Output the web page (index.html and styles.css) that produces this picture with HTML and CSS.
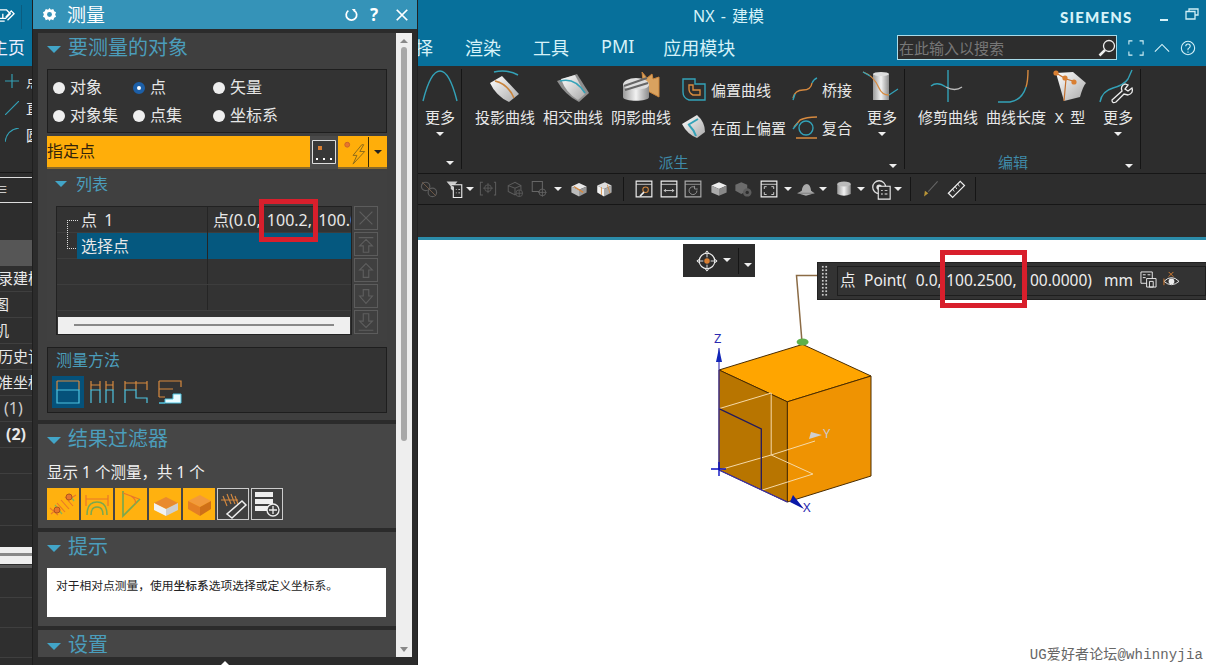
FILE: index.html
```html
<!DOCTYPE html>
<html lang="zh">
<head>
<meta charset="utf-8">
<title>NX - 建模</title>
<link rel="stylesheet" href="styles.css">
</head>
<body>
<svg class="sprite" aria-hidden="true">
  <defs>
    <linearGradient id="sheet" x1="0" y1="0" x2="1" y2="1"><stop offset="0" stop-color="#fff"/><stop offset="1" stop-color="#a9a9a9"/></linearGradient>
    <linearGradient id="cyl" x1="0" y1="0" x2="1" y2="0"><stop offset="0" stop-color="#9a9a9a"/><stop offset=".5" stop-color="#f2f2f2"/><stop offset="1" stop-color="#8c8c8c"/></linearGradient>
  </defs>
  <symbol id="r-arc" viewBox="0 0 40 36"><path d="M3 32C8 12 14 2 20 2s12 10 17 30" fill="none" stroke="#33a2b8" stroke-width="1.4"/></symbol>
  <symbol id="r-proj" viewBox="0 0 40 36"><path d="M5 14 17 7 34 25 24 33Q11 27 5 14Z" fill="url(#sheet)"/><path d="M10 12Q23 15 29 29" fill="none" stroke="#c9843c" stroke-width="1.6"/><path d="M9 3Q22 0 33 6" fill="none" stroke="#33a2b8" stroke-width="1.6"/></symbol>
  <symbol id="r-inter" viewBox="0 0 40 36"><path d="M4 12 24 5 36 24 26 33Q12 26 4 12Z" fill="#8f8f8f"/><path d="M8 10 22 6 32 25 25 31Q13 24 8 10Z" fill="url(#sheet)"/><path d="M7 12Q22 8 32 24" fill="none" stroke="#33a2b8" stroke-width="1.6"/></symbol>
  <symbol id="r-shadow" viewBox="0 0 40 36"><path d="M21 3 26 9 31 5 32 10 38 8 38 28 23 20Z" fill="#d9a25f" stroke="#c9843c"/><ellipse cx="15" cy="16" rx="13" ry="7" fill="#ddd"/><path d="M2 16V28C2 33 28 33 28 28V16C28 22 2 22 2 16Z" fill="url(#cyl)"/><path d="M3 17 26 9M4 21 27 14" stroke="#666" stroke-width="2"/></symbol>
  <symbol id="s-offset" viewBox="0 0 26 26"><path d="M2 3H14V8H24V24H8Q2 22 2 16Z" fill="none" stroke="#33a2b8" stroke-width="1.4"/><path d="M8 9H12V14H19V19H12Q8 17 8 13Z" fill="none" stroke="#d78a3f" stroke-width="1.4"/></symbol>
  <symbol id="s-face" viewBox="0 0 26 26"><path d="M1 10 16 1Q24 8 24 18L16 24Q6 20 1 10Z" fill="url(#sheet)"/><path d="M7 11 17 5M8 11Q13 16 15 22" fill="none" stroke="#33a2b8" stroke-width="2"/></symbol>
  <symbol id="s-bridge" viewBox="0 0 26 26"><path d="M1 22Q3 14 11 14T20 7" fill="none" stroke="#d78a3f" stroke-width="1.4"/><path d="M1 24 3 18M20 7Q22 3 25 2" fill="none" stroke="#33a2b8" stroke-width="1.4"/></symbol>
  <symbol id="s-comp" viewBox="0 0 26 26"><circle cx="14" cy="14" r="7" fill="none" stroke="#33a2b8" stroke-width="1.4"/><path d="M2 13 8 6Q14 3 25 3M4 24H25" fill="none" stroke="#d78a3f" stroke-width="1.4"/><path d="M1 15 6 9" stroke="#33a2b8" stroke-width="1.4"/></symbol>
  <symbol id="r-more2" viewBox="0 0 40 36"><path d="M11 5H27V31H11Z" fill="url(#cyl)"/><ellipse cx="19" cy="5" rx="8" ry="2" fill="#ddd"/><path d="M1 3C10 6 14 12 17 19S26 26 27 26" fill="none" stroke="#d78a3f" stroke-width="1.3"/><path d="M1 3 8 7M27 26 36 20" stroke="#33a2b8" stroke-width="1.3"/></symbol>
  <symbol id="r-trim" viewBox="0 0 40 36"><path d="M20 1V33" stroke="#33a2b8" stroke-width="1.4"/><path d="M3 17Q9 12 18 18" fill="none" stroke="#33a2b8" stroke-width="1.4"/><path d="M18 18Q27 23 34 18" fill="none" stroke="#bbb" stroke-width="1.4"/></symbol>
  <symbol id="r-len" viewBox="0 0 40 36"><path d="M2 33H14Q26 31 30 18" fill="none" stroke="#33a2b8" stroke-width="1.4"/><path d="M30 18Q32 12 32 1" fill="none" stroke="#d78a3f" stroke-width="1.4"/></symbol>
  <symbol id="r-x" viewBox="0 0 40 36"><path d="M6 4 14 32 30 28Q33 17 36 14L23 3Z" fill="url(#sheet)"/><path d="M6 4 16 10 23 12M16 10 14 32" fill="none" stroke="#c46f2c" stroke-width="1.2"/><circle cx="6" cy="4" r="2.6" fill="#d97f32"/><circle cx="15" cy="9" r="2.6" fill="#d97f32"/><circle cx="24" cy="13" r="2.6" fill="#d97f32"/></symbol>
  <symbol id="r-wrench" viewBox="0 0 40 36"><path d="M2 33Q4 22 15 19T30 10L34 1" fill="none" stroke="#33a2b8" stroke-width="1.4"/><path d="M14 31 24 22Q22 17 27 15L30 16 27 20 30 22 34 19Q36 24 30 26L26 25 18 33Q14 35 14 31Z" fill="#2d2d2d" stroke="#eee" stroke-width="1.3"/></symbol>
  <symbol id="q-link" viewBox="-2 -2 26 26"><circle cx="7" cy="8" r="5" fill="none" stroke="#5c5c5c" stroke-width="1.4"/><circle cx="15" cy="15" r="5" fill="none" stroke="#5c5c5c" stroke-width="1.4"/><path d="M3 3 19 19" stroke="#7a5f4a"/></symbol>
  <symbol id="q-filter" viewBox="-2 -2 26 26"><path d="M1 2H14L9 8V13L6 11V8Z" fill="#ccc"/><path d="M6 6H19V21H9V8" fill="#2d2d2d" stroke="#eee" stroke-width="1.3"/><path d="M12 11h1v1h-1zM15 11h2v1h-2zM12 15h1v1h-1zM15 15h2v1h-2z" fill="#eee"/></symbol>
  <symbol id="q-d1" viewBox="-2 -2 26 26"><path d="M5 3H2V18H5M18 3H20V18H18" fill="none" stroke="#5c5c5c" stroke-width="1.2"/><circle cx="11" cy="10" r="4" fill="none" stroke="#5c5c5c"/><path d="M11 4V16M5 10H17" stroke="#5c5c5c"/></symbol>
  <symbol id="q-d2" viewBox="-2 -2 26 26"><path d="M3 7 11 3 18 7V14L11 18 3 14ZM3 7 11 10 18 7M11 10V18" fill="none" stroke="#5c5c5c" stroke-width="1.2"/><circle cx="16" cy="16" r="4" fill="#2d2d2d" stroke="#5c5c5c"/><path d="M16 12V20M12 16H20" stroke="#5c5c5c"/></symbol>
  <symbol id="q-d3" viewBox="-2 -2 26 26"><path d="M3 2H15V14H3Z" fill="none" stroke="#666" stroke-width="1.2"/><circle cx="15" cy="15" r="4" fill="#2d2d2d" stroke="#666"/><path d="M15 10V20M10 15H20" stroke="#666"/></symbol>
  <symbol id="q-box1" viewBox="-2 -2 26 26"><path d="M2 8 11 4 20 8 11 12Z" fill="#e8e8e8"/><path d="M2 8V15L11 20V12Z" fill="#bbb"/><path d="M20 8V15L11 20V12Z" fill="#999"/><path d="M5 8 16 15" stroke="#d78a3f" stroke-width="1.6"/></symbol>
  <symbol id="q-box2" viewBox="-2 -2 26 26"><path d="M3 7 12 3 20 7 11 11Z" fill="#ddd"/><path d="M3 7V15L11 20V11Z" fill="#f2f2f2"/><path d="M20 7V15L11 20V11Z" fill="#aaa"/><path d="M8 9V18M15 6 18 16" stroke="#d78a3f"/></symbol>
  <symbol id="q-win1" viewBox="-3 -3 28 28"><path d="M1 1H21V21H1Z" fill="#2d2d2d" stroke="#eee" stroke-width="1.5"/><path d="M1 5H21" stroke="#eee"/><circle cx="13" cy="12" r="3.5" fill="none" stroke="#d78a3f" stroke-width="1.3"/><path d="M11 15 6 20" stroke="#eee" stroke-width="2"/></symbol>
  <symbol id="q-win2" viewBox="-3 -3 28 28"><path d="M1 1H21V21H1Z" fill="#2d2d2d" stroke="#eee" stroke-width="1.5"/><path d="M1 5H21" stroke="#eee"/><path d="M5 13H17M7 11 5 13 7 15M15 11 17 13 15 15" fill="none" stroke="#eee"/></symbol>
  <symbol id="q-win3" viewBox="-3 -3 28 28"><path d="M1 1H21V21H1Z" fill="#2d2d2d" stroke="#aaa" stroke-width="1.5"/><path d="M1 5H21" stroke="#aaa"/><path d="M16 13A5 5 0 1 1 13 8.500M13 7V11H17" fill="none" stroke="#aaa"/></symbol>
  <symbol id="q-cube" viewBox="-2 -2 26 26"><path d="M2 7 11 3 20 7 11 11Z" fill="#eee"/><path d="M2 7V15L11 19V11Z" fill="#aaa"/><path d="M20 7V15L11 19V11Z" fill="#888"/></symbol>
  <symbol id="q-gear" viewBox="-2 -2 26 26"><path d="M2 6 9 3 16 6V13L9 17 2 13Z" fill="#6c6c6c"/><circle cx="16" cy="15" r="5" fill="#5c5c5c"/><circle cx="16" cy="15" r="2" fill="#2d2d2d"/></symbol>
  <symbol id="q-fit" viewBox="-3 -3 28 28"><path d="M1 1H21V21H1Z" fill="#2d2d2d" stroke="#eee" stroke-width="1.5"/><path d="M1 5H21" stroke="#eee"/><path d="M5 11V8H8M14 8H17V11M17 15V18H14M8 18H5V15" fill="none" stroke="#eee"/></symbol>
  <symbol id="q-hat" viewBox="-2 -2 26 26"><path d="M1 16 6 13Q7 5 12 5 16 5 17 13L21 16 11 19Z" fill="#aaa"/><path d="M1 16H21" stroke="#777"/></symbol>
  <symbol id="q-cyl" viewBox="-2 -2 26 26"><path d="M3 5H19V17Q11 21 3 17Z" fill="url(#cyl)"/><ellipse cx="11" cy="5" rx="8" ry="3" fill="#bbb"/></symbol>
  <symbol id="q-eye" viewBox="-1 -1 24 24"><circle cx="9" cy="9" r="7" fill="none" stroke="#ddd" stroke-width="1.4"/><circle cx="9" cy="9" r="3" fill="#ddd"/><path d="M8 8H21V22H8Z" fill="#2d2d2d" stroke="#eee" stroke-width="1.2"/><path d="M11 12h2v1h-2zM15 12h3v1h-3zM11 16h2v1h-2zM15 16h3v1h-3z" fill="#eee"/></symbol>
  <symbol id="q-brush" viewBox="-2 -2 26 26"><path d="M20 2 9 14" stroke="#666" stroke-width="1.2"/><path d="M5 13 9 16 4 20Z" fill="#b99537"/></symbol>
  <symbol id="q-rule" viewBox="-2 -2 26 26"><path d="M16 2 21 7 7 21 2 16Z" fill="none" stroke="#eee" stroke-width="1.5"/><path d="M13 5 15 8M10 8 12 11M7 11 9 14" stroke="#eee"/></symbol>
  <symbol id="m-1" viewBox="0 0 32 32"><path d="M5 5H27M5 5V14M27 5V14" fill="none" stroke="#d78a3f" stroke-width="1.2"/><path d="M5 14H27V27H5Z" fill="none" stroke="#4fc3e0" stroke-width="1.2"/></symbol>
  <symbol id="m-2" viewBox="0 0 32 32"><path d="M5 5V14M14 5V14M5 9H14M20 5V14M27 5V14M20 9H27" fill="none" stroke="#d78a3f" stroke-width="1.2"/><path d="M5 27V14H14V27M20 27V14H27V27" fill="none" stroke="#4fc3e0" stroke-width="1.2"/></symbol>
  <symbol id="m-3" viewBox="0 0 32 32"><path d="M5 5V14M16 5V14M27 5V14M5 7H27" fill="none" stroke="#d78a3f" stroke-width="1.2"/><path d="M5 27V14H16V22H27V27" fill="none" stroke="#4fc3e0" stroke-width="1.2"/></symbol>
  <symbol id="m-4" viewBox="0 0 32 32"><path d="M5 5H27V11M5 5V21M5 13H19M5 21H11" fill="none" stroke="#d78a3f" stroke-width="1.2"/><path d="M5 27H11V23H19V18H27V27Z" fill="#eafcff" stroke="#4fc3e0"/></symbol>
  <symbol id="f-1" viewBox="0 0 32 32"><path d="M4 26 12 19M21 12 29 7M3 20 11 27M10 15 18 24M14 12 22 21M18 9 26 18" stroke="#e9762b" stroke-width="1.1"/><path d="M8 17 15 26M22 6 27 13" stroke="#88b558" stroke-width="1.3"/><circle cx="10" cy="22" r="3" fill="#e9762b" stroke="#b0551c"/><circle cx="22" cy="9" r="3" fill="#e9762b" stroke="#b0551c"/></symbol>
  <symbol id="f-2" viewBox="0 0 32 32"><path d="M5 7V18M27 7V18M5 11H27" fill="none" stroke="#e9762b" stroke-width="1.2"/><path d="M6 27Q6 14 16 14T26 27M10 27Q10 19 16 19T22 27" fill="none" stroke="#7aa84e" stroke-width="1.5"/></symbol>
  <symbol id="f-3" viewBox="0 0 32 32"><path d="M8 3V28L25 11" fill="none" stroke="#7aa84e" stroke-width="1.7"/><path d="M8 5 24 11M16 8Q22 12 20 16" fill="none" stroke="#e9762b" stroke-width="1.1"/></symbol>
  <symbol id="f-4" viewBox="0 0 32 32"><path d="M5 15 17 9 29 15 17 21Z" fill="#e98a2e"/><path d="M5 15V22L17 28V21Z" fill="#f2f2f2"/><path d="M29 15V22L17 28V21Z" fill="#cfcfcf"/></symbol>
  <symbol id="f-5" viewBox="0 0 32 32"><path d="M5 13 17 7 28 13 17 19Z" fill="#f29a3c"/><path d="M5 13V21L17 28V19Z" fill="#e47f24"/><path d="M28 13V21L17 28V19Z" fill="#cf7018"/></symbol>
  <symbol id="f-6" viewBox="0 0 32 32"><path d="M4 12H21M6 8 10 18M10 6 14 16M14 6 18 16M18 8 21 16" fill="none" stroke="#d78a3f" stroke-width="1.1"/><path d="M25 13 29 17 15 30 10 26Z" fill="none" stroke="#eee" stroke-width="1.5"/></symbol>
  <symbol id="f-7" viewBox="0 0 32 32"><path d="M4 4H22V9H4ZM4 11H22V16H4ZM4 18H18V23H4Z" fill="#eee"/><circle cx="22" cy="22" r="6" fill="#3f3f3f" stroke="#eee" stroke-width="1.3"/><path d="M22 18V26M18 22H26" stroke="#eee" stroke-width="1.3"/></symbol>
  <symbol id="tb-x" viewBox="0 0 24 24"><path d="M5 5 19 19M19 5 5 19" stroke="#5e5e5e" stroke-width="1.3"/></symbol>
  <symbol id="tb-top" viewBox="0 0 24 24"><path d="M4 5H20M12 7 19 14H15V21H9V14H5Z" fill="none" stroke="#5e5e5e" stroke-width="1.2"/></symbol>
  <symbol id="tb-up" viewBox="0 0 24 24"><path d="M12 5 19 12H15V20H9V12H5Z" fill="none" stroke="#5e5e5e" stroke-width="1.2"/></symbol>
  <symbol id="tb-down" viewBox="0 0 24 24"><path d="M12 20 19 12H15V5H9V12H5Z" fill="none" stroke="#5e5e5e" stroke-width="1.2"/></symbol>
  <symbol id="tb-bot" viewBox="0 0 24 24"><path d="M4 21H20M12 18 19 11H15V3H9V11H5Z" fill="none" stroke="#5e5e5e" stroke-width="1.2"/></symbol>
</svg>

<div class="app">
  <aside class="side">
    <div class="side-top">
      <svg class="side-logo" viewBox="0 0 16 20"><path d="M0 3H7L11 7 6 12H0M0 15H5M3 7V12M8 14 15 7 12 4 6 11" fill="none" stroke="#fff" stroke-width="1.4"/></svg>
      <span class="side-sep"></span>
    </div>
    <div class="side-tab"><span>主页</span></div>
    <div class="side-ribbon">
      <div class="side-tool"><svg viewBox="0 0 16 16"><path d="M8 0V16M0 8H16" stroke="#33a2b8" stroke-width="1.3"/></svg><span>点</span></div>
      <div class="side-tool"><svg viewBox="0 0 16 16"><path d="M0 16 16 0" stroke="#33a2b8" stroke-width="1.3"/></svg><span>直</span></div>
      <div class="side-tool"><svg viewBox="0 0 16 16"><path d="M0 16Q2 2 16 0" fill="none" stroke="#33a2b8" stroke-width="1.3"/></svg><span>圆</span></div>
    </div>
    <div class="side-input"><span>≡</span></div>
    <div class="side-gap"></div>
    <div class="side-head"></div>
    <div class="nav-row"><span class="t1">录建模</span></div>
    <div class="nav-row"><span class="t2">图</span></div>
    <div class="nav-row"><span class="t2">机</span></div>
    <div class="nav-row"><span class="t1">历史记</span></div>
    <div class="nav-row"><span class="t1">准坐标</span></div>
    <div class="nav-row"><span class="t3">(1)</span></div>
    <div class="nav-row"><span class="t4">(2)</span></div>
    <div class="nav-row"></div>
    <div class="nav-row"></div>
    <div class="nav-row"></div>
    <div class="side-scroll"><i></i></div>
    <div class="nav-row tall"></div>
    <div class="nav-row tall"></div>
    <div class="nav-row tall"></div>
  </aside>

  <section class="dialog">
    <header class="dlg-title">
      <svg class="gear" viewBox="0 0 16 16"><path d="M8 1 9.500 3 12 2 13 4.500 15 5.500 14 8 15 10.500 13 11.500 12 14 9.500 13 8 15 6.500 13 4 14 3 11.500 1 10.500 2 8 1 5.500 3 4.500 4 2 6.500 3Z" fill="#fff"/><circle cx="8" cy="8" r="2.600" fill="#3593b8"/></svg>
      <h1>测量</h1>
      <svg class="tb-icon refresh" viewBox="0 0 16 16"><path d="M5 3A6 6 0 1 0 12 3" fill="none" stroke="#fff" stroke-width="2"/><path d="M9 1 13 1 12 5Z" fill="#fff"/></svg>
      <span class="help">?</span>
      <svg class="tb-icon close" viewBox="0 0 16 16"><path d="M2 2 14 14M14 2 2 14" stroke="#fff" stroke-width="2"/></svg>
    </header>
    <div class="dlg-body">
      <div class="dlg-content">
        <section class="panel p1">
          <div class="panel-head"><i class="tri"></i><h2>要测量的对象</h2></div>
          <div class="radios">
            <label class="radio"><i></i>对象</label>
            <label class="radio on"><i></i>点</label>
            <label class="radio"><i></i>矢量</label>
            <label class="radio"><i></i>对象集</label>
            <label class="radio"><i></i>点集</label>
            <label class="radio"><i></i>坐标系</label>
          </div>
          <div class="pick">
            <div class="pick-label">指定点</div>
            <div class="pick-btn"><svg viewBox="0 0 24 24"><path d="M0.500 0.500H23.500V23.500H0.500Z" fill="#383838" stroke="#ddd"/><path d="M6 6h4v4H6z" fill="#d97f32"/><path d="M4 18h2v2H4zM11 18h2v2h-2zM18 18h2v2h-2z" fill="#fff"/></svg></div>
            <div class="pick-snap">
              <svg viewBox="0 0 28 32"><circle cx="7" cy="9" r="2.500" fill="#e9762b" stroke="#c9642a"/><path d="M22 9 13 20H17L13 29 25 16H20L24 9Z" fill="none" stroke="#8a6a1a"/></svg>
              <i class="vbar"></i><i class="caret dark"></i>
            </div>
          </div>
          <div class="sub">
            <div class="sub-head"><i class="tri small"></i><h3>列表</h3></div>
            <div class="list">
              <div class="table">
                <div class="tr first"><span class="c1">点 1</span><span class="c2">点(0.0, 100.2, 100.0000)</span></div>
                <div class="tr sel"><span class="c1">选择点</span><span class="c2"></span></div>
                <div class="tr"><span class="c1"></span><span class="c2"></span></div>
                <div class="tr"><span class="c1"></span><span class="c2"></span></div>
                <div class="hscroll"><i></i></div>
              </div>
              <div class="tbtns">
                <button class="tbtn"><svg><use href="#tb-x"/></svg></button>
                <button class="tbtn"><svg><use href="#tb-top"/></svg></button>
                <button class="tbtn"><svg><use href="#tb-up"/></svg></button>
                <button class="tbtn"><svg><use href="#tb-down"/></svg></button>
                <button class="tbtn"><svg><use href="#tb-bot"/></svg></button>
              </div>
            </div>
          </div>
          <div class="method">
            <h3>测量方法</h3>
            <div class="method-icons">
              <span class="mi on"><svg><use href="#m-1"/></svg></span>
              <span class="mi"><svg><use href="#m-2"/></svg></span>
              <span class="mi"><svg><use href="#m-3"/></svg></span>
              <span class="mi"><svg><use href="#m-4"/></svg></span>
            </div>
          </div>
        </section>
        <section class="panel p2">
          <div class="panel-head"><i class="tri"></i><h2>结果过滤器</h2></div>
          <p class="count">显示 1 个测量，共 1 个</p>
          <div class="filters">
            <span class="fi"><svg><use href="#f-1"/></svg></span>
            <span class="fi"><svg><use href="#f-2"/></svg></span>
            <span class="fi"><svg><use href="#f-3"/></svg></span>
            <span class="fi"><svg><use href="#f-4"/></svg></span>
            <span class="fi"><svg><use href="#f-5"/></svg></span>
            <span class="fi off"><svg><use href="#f-6"/></svg></span>
            <span class="fi off"><svg><use href="#f-7"/></svg></span>
          </div>
        </section>
        <section class="panel p3">
          <div class="panel-head"><i class="tri"></i><h2>提示</h2></div>
          <div class="hint">对于相对点测量，使用<b>坐标系</b>选项选择或定义坐标系。</div>
        </section>
        <section class="panel p4">
          <div class="panel-head"><i class="tri"></i><h2>设置</h2></div>
        </section>
      </div>
      <div class="vscroll"><i class="up"></i><span class="thumb"></span><i class="down"></i></div>
    </div>
    <div class="dlg-foot"><i></i></div>
  </section>

  <main class="main">
    <div class="top">
      <div class="titlebar">
        <span class="app-title">NX - 建模</span>
        <span class="brand">SIEMENS</span>
        <span class="win-min"></span>
        <svg class="win-restore" viewBox="0 0 14 12"><path d="M4 3V1H13V7H10M1 3.500H10V11H1Z" fill="none" stroke="#cfeef5" stroke-width="1.300"/></svg>
      </div>
      <div class="tabbar">
        <nav class="tabs"><span>选择</span><span>渲染</span><span>工具</span><span>PMI</span><span>应用模块</span></nav>
        <div class="search"><span>在此输入以搜索</span><svg viewBox="0 0 18 18"><circle cx="11" cy="7" r="5.500" fill="none" stroke="#eee" stroke-width="1.300"/><path d="M7 11 1.500 16.500" stroke="#eee" stroke-width="2.500"/></svg></div>
        <svg class="tab-icon" viewBox="0 0 18 18"><path d="M1 5V1H5M13 1H17V5M17 13V17H13M5 17H1V13" fill="none" stroke="#d6f2f8" stroke-width="1.200"/></svg>
        <svg class="tab-icon" viewBox="0 0 18 18"><path d="M1 13 9 5 17 13" fill="none" stroke="#d6f2f8" stroke-width="1.300"/></svg>
        <svg class="tab-icon" viewBox="0 0 18 18"><circle cx="9" cy="9" r="7.500" fill="none" stroke="#d6f2f8" stroke-width="1.200"/><path d="M6.500 7Q6.500 4.500 9 4.500T11.500 7Q11.500 8.500 9 10V11.500M9 13V14.300" fill="none" stroke="#d6f2f8" stroke-width="1.200"/></svg>
      </div>
    </div>

    <div class="ribbon">
      <div class="rgroup g0">
        <div class="ritems">
          <div class="rbig narrow"><svg><use href="#r-arc"/></svg><span>更多</span><i class="caret"></i></div>
        </div>
        <div class="rfoot"><span></span><i class="caret"></i></div>
      </div>
      <div class="rgroup g1">
        <div class="ritems">
          <div class="rbig"><svg><use href="#r-proj"/></svg><span>投影曲线</span></div>
          <div class="rbig"><svg><use href="#r-inter"/></svg><span>相交曲线</span></div>
          <div class="rbig"><svg><use href="#r-shadow"/></svg><span>阴影曲线</span></div>
          <div class="rcol c-a">
            <div class="rsmall"><svg><use href="#s-offset"/></svg><span>偏置曲线</span></div>
            <div class="rsmall"><svg><use href="#s-face"/></svg><span>在面上偏置</span></div>
          </div>
          <div class="rcol c-b">
            <div class="rsmall"><svg><use href="#s-bridge"/></svg><span>桥接</span></div>
            <div class="rsmall"><svg><use href="#s-comp"/></svg><span>复合</span></div>
          </div>
          <div class="rbig narrow"><svg><use href="#r-more2"/></svg><span>更多</span><i class="caret"></i></div>
        </div>
        <div class="rfoot"><span>派生</span><i class="caret"></i></div>
      </div>
      <div class="rgroup g2">
        <div class="ritems">
          <div class="rbig"><svg><use href="#r-trim"/></svg><span>修剪曲线</span></div>
          <div class="rbig"><svg><use href="#r-len"/></svg><span>曲线长度</span></div>
          <div class="rbig xt"><svg><use href="#r-x"/></svg><span>X 型</span></div>
          <div class="rbig narrow"><svg><use href="#r-wrench"/></svg><span>更多</span><i class="caret"></i></div>
        </div>
        <div class="rfoot"><span>编辑</span><i class="caret"></i></div>
      </div>
    </div>

    <div class="quick">
      <svg class="qi"><use href="#q-link"/></svg>
      <svg class="qi m4"><use href="#q-filter"/></svg><i class="caret qa"></i>
      <svg class="qi m3"><use href="#q-d1"/></svg>
      <svg class="qi m5"><use href="#q-d2"/></svg>
      <svg class="qi m2"><use href="#q-d3"/></svg><i class="caret qa m4"></i>
      <svg class="qi m6"><use href="#q-box1"/></svg>
      <svg class="qi m3"><use href="#q-box2"/></svg>
      <i class="qsep m8"></i>
      <svg class="qi m9"><use href="#q-win1"/></svg>
      <svg class="qi m3"><use href="#q-win2"/></svg>
      <svg class="qi m2"><use href="#q-win3"/></svg>
      <svg class="qi m4"><use href="#q-cube"/></svg>
      <svg class="qi m2"><use href="#q-gear"/></svg>
      <svg class="qi m4"><use href="#q-fit"/></svg><i class="caret qa m4"></i>
      <svg class="qi m3"><use href="#q-hat"/></svg><i class="caret qa m2"></i>
      <svg class="qi m6"><use href="#q-cyl"/></svg><i class="caret qa m2"></i>
      <svg class="qi m5"><use href="#q-eye"/></svg><i class="caret qa m2"></i>
      <i class="qsep m8"></i>
      <svg class="qi m8"><use href="#q-brush"/></svg>
      <svg class="qi m4"><use href="#q-rule"/></svg>
      <i class="qsep m8"></i>
    </div>
    <div class="tabstrip"></div>

    <div class="viewport">
      <svg class="scene" viewBox="419 240 787 425" preserveAspectRatio="xMinYMin">
        <path d="M817 275.500H796.500L802 342" fill="none" stroke="#8b6b45" stroke-width="1.500"/>
        <path d="M719 370 802.600 344.400 871 376 787.300 401.800Z" fill="#ffa500" stroke="#4a2c00"/>
        <path d="M787.300 401.800 871 376V476L787.300 502Z" fill="#ef9302" stroke="#4a2c00"/>
        <path d="M719 370 787.300 401.800V502L719 470Z" fill="#b87500" stroke="#4a2c00"/>
        <path d="M719 408.700 771.200 393V455M719 470 771.200 455 812.900 474 762.300 490M771.200 455 815 441" fill="none" stroke="#f5d9a8" stroke-width="1"/>
        <path d="M719 408.700 761.300 429V490" fill="none" stroke="#221a5e" stroke-width="1.300"/>
        <path d="M719 348V470M719 470 787.300 502" fill="none" stroke="#3a2fb0" stroke-width="1.100"/>
        <path d="M719 348 722 362H716Z" fill="#1226b8"/>
        <path d="M711 469H726M719 462V476" stroke="#0a10c0" stroke-width="1.400"/>
        <path d="M790 502 804 509 793 495Z" fill="#0a18a8"/>
        <path d="M822 435 809 439 811 432Z" fill="#cfcfcf"/>
        <ellipse cx="802.600" cy="342" rx="6" ry="3.500" fill="#5fb04a"/>
        <text x="714" y="343" class="axis z">Z</text>
        <text x="803" y="512" class="axis x">X</text>
        <text x="823" y="438" class="axis y">Y</text>
      </svg>
      <div class="snapper">
        <svg viewBox="0 0 24 24"><circle cx="12" cy="12" r="8.500" fill="none" stroke="#eee" stroke-width="1.200"/><circle cx="12" cy="12" r="3" fill="#d97f32"/><path d="M12 1V8M12 16V23M1 12H8M16 12H23M10 3 12 1 14 3M10 21 12 23 14 21M3 10 1 12 3 14M21 10 23 12 21 14" fill="none" stroke="#eee"/></svg>
        <i class="caret"></i><i class="snapper-sep"></i><i class="caret low"></i>
      </div>
      <div class="readout">
        <span class="grip"></span>
        <div class="readout-box">
          <span class="ro-pt">点</span>
          <span class="ro-val">Point( &nbsp;0.0, 100.2500, 100.0000)</span>
          <span class="ro-unit">mm</span>
          <svg class="ro-ic" viewBox="0 0 18 18"><path d="M1 1H13V13H1Z" fill="#2f2f2f" stroke="#eee"/><path d="M3 4H6M3 7H6M8 4H11" stroke="#eee"/><path d="M7 8H17V17H7Z" fill="#2f2f2f" stroke="#eee"/><path d="M10 11H14V17H10Z" fill="none" stroke="#eee"/></svg>
          <svg class="ro-ic" viewBox="0 0 18 18"><path d="M1 11Q9 3 17 11 9 18 1 11Z" fill="none" stroke="#eee"/><circle cx="9" cy="11" r="3" fill="#eee"/><path d="M6 1 11 6M11 1 6 6M1 8V15" stroke="#d97f32"/></svg>
        </div>
      </div>
      <span class="watermark">UG爱好者论坛@whinnyjia</span>
    </div>
  </main>

  <i class="redbox a"></i>
  <i class="redbox b"></i>
</div>
</body>
</html>
```
FILE: styles.css
```css
* { box-sizing: border-box; }
html, body { margin: 0; padding: 0; background: #fff; }
body { font-family: "Noto Sans", "Noto Sans CJK SC", sans-serif; color: #e8e8e8; }
.sprite { position: absolute; width: 0; height: 0; }
h1, h2, h3, p { margin: 0; font-weight: 400; }
i { display: block; font-style: normal; }
svg { display: block; }

.app { position: relative; display: grid; grid-template-columns: 33px 385px 788px; width: 1206px; height: 665px; overflow: hidden; }

/* left strip */
.side { background: #2d2d2d; border-right: 1px solid #1f1f1f; overflow: hidden; display: flex; flex-direction: column; }
.side-top { height: 33px; flex: none; background: #07709b; display: flex; align-items: center; gap: 6px; }
.side-logo { width: 15px; height: 19px; }
.side-sep { width: 1px; height: 24px; background: #0b5c7f; }
.side-tab { height: 33px; flex: none; background: #07709b; font-size: 17px; line-height: 29px; white-space: nowrap; color: #eef; }
.side-tab span { margin-left: -9px; display: block; }
.side-ribbon { height: 107px; flex: none; padding-top: 1px; border-bottom: 1px solid #181818; }
.side-tool { height: 27px; display: flex; align-items: center; gap: 7px; padding-left: 5px; font-size: 15px; white-space: nowrap; }
.side-tool svg { width: 14px; height: 14px; flex: none; }
.side-input { height: 26px; flex: none; margin-top: 4px; border-top: 1px solid #ddd; border-bottom: 1px solid #ddd; font-size: 13px; line-height: 22px; }
.side-input span { display: block; margin-left: -5px; }
.side-gap { height: 37px; flex: none; }
.side-head { height: 26px; flex: none; background: #565656; }
.nav-row { height: 26px; flex: none; border-bottom: 1px solid #3f3f3f; font-size: 15px; line-height: 25px; white-space: nowrap; background: #2f2f2f; }
.nav-row.tall { height: 30px; }
.nav-row .t1 { margin-left: -2px; display: block; }
.nav-row .t2 { margin-left: -6px; display: block; }
.nav-row .t3 { margin-left: 4px; display: block; color: #ccc; font-size: 16px; }
.nav-row .t4 { margin-left: 6px; display: block; font-weight: 700; font-size: 16px; }
.side-scroll { height: 42px; flex: none; padding-top: 21px; border-bottom: 3px solid #555; background: #2d2d2d; }
.side-scroll i { height: 17px; background: linear-gradient(#eee 38%, #888 38%, #888 55%, #eee 55%); }

/* dialog */
.dialog { z-index: 2; display: flex; flex-direction: column; background: #2b2b2b; border-right: 1px solid #222; }
.dlg-title { height: 29px; flex: none; background: #3593b8; display: flex; align-items: center; padding-left: 9px; color: #fff; }
.gear { width: 15px; height: 15px; }
.dlg-title h1 { font-size: 19px; margin-left: 10px; line-height: 29px; flex: 1; padding-top: 2px; }
.tb-icon { width: 14px; height: 14px; }
.refresh { margin-right: 10px; }
.help { font-size: 17px; font-weight: 700; width: 12px; margin-right: 15px; text-align: center; line-height: 29px; }
.close { margin-right: 8px; }
.dlg-body { flex: 1; min-height: 0; display: flex; padding: 4px 6px 0 5px; }
.dlg-content { width: 358px; flex: none; display: flex; flex-direction: column; gap: 4px; overflow: hidden; }
.panel { background: #464646; padding: 0 9px; flex: none; }
.p1 { height: 387px; background: #3f3f3f; }
.p2 { height: 104px; }
.p3 { height: 94px; }
.p4 { height: 27px; }
.panel-head { height: 32px; display: flex; align-items: center; gap: 7px; color: #4b9dbb; padding-bottom: 2px; }
.panel-head h2 { font-size: 20px; line-height: 28px; }
.tri { width: 0; height: 0; border-left: 7px solid transparent; border-right: 7px solid transparent; border-top: 7px solid #42a5c8; margin-top: 2px; }
.tri.small { border-left-width: 6.5px; border-right-width: 6.5px; border-top-width: 6px; }

.radios { margin-top: 4px; height: 64px; width: 340px; background: #333; border: 1px solid #1e1e1e; display: grid; grid-template-columns: 80px 80px 1fr; grid-template-rows: 28px 28px; padding: 3px 0 0 5px; font-size: 16px; color: #e6e6e6; }
.radio { display: flex; align-items: center; gap: 5px; line-height: 28px; white-space: nowrap; }
.radio i { width: 12px; height: 12px; border-radius: 50%; background: #eee; flex: none; margin-top: 2px; }
.radio.on i { background: #fff; border: 4px solid #1c5fa8; }

.pick { margin-top: 3px; height: 33px; width: 340px; display: flex; }
.pick-label { width: 263px; background: #ffae0a; border-bottom: 2px solid #8a6a2a; color: #33240a; font-size: 16px; line-height: 31px; }
.pick-btn { width: 28px; padding: 4px 0 0 2px; background: #4a4a4a; }
.pick-btn svg { width: 24px; height: 24px; }
.pick-snap { width: 49px; background: #ffae0a; border-bottom: 2px solid #8a6a2a; display: flex; align-items: center; }
.pick-snap svg { width: 28px; height: 31px; flex: none; margin-left: 2px; }
.vbar { width: 1px; height: 30px; background: #3a2a00; }
.caret { width: 0; height: 0; border-left: 4px solid transparent; border-right: 4px solid transparent; border-top: 4px solid #eee; }
.caret.dark { border-top-color: #222; margin-left: 5px; }

.sub { margin-top: 2px; width: 340px; height: 170px; background: #404040; padding-left: 7px; }
.sub-head { height: 28px; display: flex; align-items: center; gap: 9px; color: #4b9dbb; padding-bottom: 4px; padding-left: 1px; }
.sub-head h3 { font-size: 16px; }
.list { margin-top: 7px; display: flex; gap: 2px; padding-left: 2px; }
.table { width: 296px; height: 129px; background: #333; border: 1px solid #222; overflow: hidden; font-size: 16px; }
.tr { position: relative; height: 26px; display: grid; grid-template-columns: 151px 143px; border-bottom: 1px solid #3d3d3d; white-space: nowrap; }
.tr .c1 { padding-left: 24px; line-height: 26px; border-right: 1px solid #252525; word-spacing: 3px; }
.tr .c2 { padding-left: 5px; line-height: 26px; overflow: hidden; word-spacing: 2px; }
.tr.first::before { content: ""; position: absolute; left: 10px; top: 13px; width: 10px; height: 27px; border: 1px dotted #ddd; border-right: 0; }
.tr.sel .c1 { background: linear-gradient(90deg, transparent 20px, #05587f 20px); }
.tr.sel .c2 { background: #05587f; }
.hscroll { height: 18px; margin: 6px 1px 0 1px; background: #efefef; padding: 7px 16px 0; border-bottom: 1px solid #222; }
.hscroll i { height: 2px; background: #888; }
.tbtns { display: flex; flex-direction: column; gap: 2px; }
.tbtn { width: 24px; height: 24px; padding: 0; background: transparent; border: 1px solid #5c5c5c; }
.tbtn svg { width: 22px; height: 22px; }
.method { margin-top: 6px; width: 340px; height: 66px; background: #333; border: 1px solid #1e1e1e; padding: 1px 0 0 4px; }
.method h3 { font-size: 16px; color: #4b9dbb; line-height: 23px; padding-left: 4px; }
.method-icons { display: flex; gap: 2px; margin-top: 4px; }
.mi { width: 32px; height: 32px; display: block; }
.mi.on { background: #05517a; }
.mi svg { width: 32px; height: 32px; }

.count { font-size: 15.500px; line-height: 32px; color: #f0f0f0; white-space: nowrap; }
.filters { display: flex; gap: 2px; }
.fi { width: 32px; height: 32px; display: block; background: #ffb10f; }
.fi svg { width: 32px; height: 32px; }
.fi.off { background: #3f3f3f; outline: 1px solid #ccc; outline-offset: -1px; }
.p3 .hint { margin-top: 4px; width: 339px; height: 49px; background: #fff; color: #222; font-size: 11.750px; line-height: 17px; padding: 9px 9px 0; white-space: nowrap; }
.hint b { font-weight: 500; }

.vscroll { width: 16px; flex: none; background: #eee; display: flex; flex-direction: column; align-items: center; padding-top: 6px; }
.vscroll .up { width: 0; border-left: 4px solid transparent; border-right: 4px solid transparent; border-bottom: 4px solid #888; }
.vscroll .thumb { width: 6px; height: 394px; margin-top: 4px; border-radius: 3px; background: #a8a8a8; }
.vscroll .down { margin-top: auto; margin-bottom: 5px; width: 0; border-left: 4px solid transparent; border-right: 4px solid transparent; border-top: 5px solid #888; }
.dlg-foot { height: 8px; flex: none; display: flex; justify-content: center; align-items: flex-end; }
.dlg-foot i { width: 0; border-left: 4px solid transparent; border-right: 4px solid transparent; border-bottom: 4px solid #fff; }

/* main */
.main { display: flex; flex-direction: column; min-width: 0; }
.top { height: 66px; flex: none; background: #07709b; }
.titlebar { position: relative; height: 33px; display: flex; align-items: center; padding-left: 275px; color: #d6f2f8; }
.app-title { font-size: 16px; width: 367px; white-space: nowrap; padding-bottom: 4px; word-spacing: 2px; }
.brand { width: 100px; font-family: Lato, "Noto Sans", sans-serif; font-weight: 900; font-size: 15px; letter-spacing: 1.200px; color: #d6f2f8; }
.win-min { width: 8px; height: 2px; background: #d6f2f8; margin: 6px 0 0 0; }
.win-restore { width: 14px; height: 12px; margin-left: 17px; margin-top: -6px; }
.tabbar { height: 33px; display: flex; align-items: center; font-size: 18px; color: #d6f2f8; }
.tabs { display: flex; gap: 32px; margin-left: -21px; width: 500px; flex: none; white-space: nowrap; padding-bottom: 5px; }
.tabs span:last-child { margin-left: -3px; }
.search { width: 220px; height: 25px; border: 1px solid #a8dbe9; background: #2d2d2d; color: #777; font-size: 15px; line-height: 22px; padding-left: 1px; display: flex; justify-content: space-between; align-items: center; margin-bottom: 4px; flex: none; }
.search svg { width: 18px; height: 18px; }
.tab-icon { width: 16px; height: 16px; margin-left: 10px; margin-bottom: 3px; flex: none; }
.search + .tab-icon { margin-left: 11px; }

.ribbon { height: 107px; flex: none; background: #2d2d2d; display: flex; padding-top: 3px; }
.rgroup { display: flex; flex-direction: column; border-right: 1px solid #151515; height: 100px; flex: none; position: relative; }
.g0 { width: 44px; }
.g1 { width: 443px; padding-left: 9px; }
.g2 { width: 236px; padding-left: 9px; }
.ritems { display: flex; height: 79px; flex: none; }
.rbig { width: 68px; flex: none; display: flex; flex-direction: column; align-items: center; font-size: 15px; color: #e8e8e8; white-space: nowrap; }
.rbig svg { width: 40px; height: 36px; flex: none; }
.rbig span { line-height: 22px; margin-top: 1px; }
.rbig .caret { margin-top: 4px; }
.rbig.narrow { width: 44px; }
.rbig.xt { width: 40px; word-spacing: 3px; }
.rbig.xt + .rbig.narrow { margin-left: 6px; }
.rcol { display: flex; flex-direction: column; padding-top: 7px; gap: 12px; flex: none; }
.c-a { width: 111px; margin-left: 6px; }
.c-b { width: 68px; }
.rsmall { display: flex; align-items: center; gap: 4px; font-size: 15px; height: 26px; white-space: nowrap; }
.rsmall svg { width: 26px; height: 26px; flex: none; }
.rfoot { position: relative; flex: 1; display: flex; align-items: center; justify-content: center; font-size: 15px; color: #3f8aa8; padding-top: 3px; }
.rfoot .caret { position: absolute; right: 7px; bottom: 4px; }
.g1 .rfoot { padding-right: 28px; }
.g2 .rfoot { padding-right: 28px; }

.quick { height: 32px; flex: none; background: #2d2d2d; border-top: 1px solid #161616; border-bottom: 1px solid #161616; display: flex; align-items: center; }
.qi { width: 22px; height: 22px; flex: none; }
.qa { flex: none; }
.qsep { width: 1px; height: 24px; background: #151515; flex: none; }
.m2 { margin-left: 2px; }
.m3 { margin-left: 3px; }
.m4 { margin-left: 4px; }
.m5 { margin-left: 5px; }
.m6 { margin-left: 6px; }
.m8 { margin-left: 8px; }
.m9 { margin-left: 9px; }
.tabstrip { height: 35px; flex: none; background: #2d2d2d; border-bottom: 3px solid #2b8caa; }

.viewport { position: relative; flex: 1; background: #fff; overflow: hidden; }
.scene { position: absolute; left: 1px; top: 0; width: 787px; height: 425px; }
.axis { font: 13px "Noto Sans", sans-serif; }
.axis.z, .axis.x { fill: #2a2ab0; }
.axis.y { fill: #c9c9c9; }
.snapper { position: absolute; left: 265px; top: 4px; width: 72px; height: 33px; background: #2d2d2d; display: flex; align-items: center; padding-left: 13px; }
.snapper svg { width: 22px; height: 22px; flex: none; }
.snapper .caret { margin-left: 5px; margin-top: -2px; }
.snapper .caret.low { margin-left: 5px; margin-top: 8px; }
.snapper-sep { width: 1px; height: 26px; margin-left: 7px; background: #151515; }
.readout { position: absolute; left: 399px; top: 22px; width: 389px; height: 38px; background: #333; border: 1px solid #222; border-right: 0; display: flex; align-items: center; padding-left: 3px; }
.grip { width: 7px; height: 32px; flex: none; background-image: radial-gradient(#ccc 1px, transparent 1.200px); background-size: 3.500px 3.500px; }
.readout-box { margin-left: 9px; flex: 1; height: 30px; border: 1px solid #1e1e1e; display: flex; align-items: center; padding: 0 0 3px 2px; font-size: 15.500px; color: #eee; white-space: nowrap; }
.ro-pt { width: 24px; }
.ro-val { width: 240px; word-spacing: .5px; }
.ro-unit { width: 36px; }
.ro-ic { width: 17px; height: 17px; margin-right: 6px; }
.watermark { position: absolute; right: 3px; bottom: 1px; font: 14px/18px "Liberation Mono", "Noto Sans CJK SC", monospace; color: #666; white-space: nowrap; letter-spacing: .15px; }

.redbox { position: absolute; z-index: 5; border: 5px solid #d81f2c; }
.redbox.a { left: 259px; top: 199px; width: 59px; height: 43px; }
.redbox.b { left: 940px; top: 250px; width: 87px; height: 58px; }
```
